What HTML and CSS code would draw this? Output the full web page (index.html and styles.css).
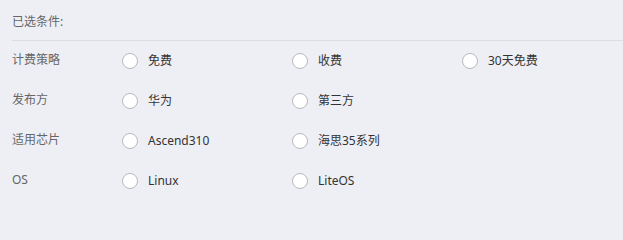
FILE: index.html
```html
<!DOCTYPE html>
<html lang="zh">
<head>
<meta charset="utf-8">
<link rel="stylesheet" href="styles.css">
</head>
<body>
<div class="panel">
  <div class="selected">已选条件:</div>
  <div class="row">
    <div class="label">计费策略</div>
    <div class="options">
      <label class="opt"><span class="radio"></span><span class="text">免费</span></label>
      <label class="opt"><span class="radio"></span><span class="text">收费</span></label>
      <label class="opt"><span class="radio"></span><span class="text">30天免费</span></label>
    </div>
  </div>
  <div class="row">
    <div class="label">发布方</div>
    <div class="options">
      <label class="opt"><span class="radio"></span><span class="text">华为</span></label>
      <label class="opt"><span class="radio"></span><span class="text">第三方</span></label>
    </div>
  </div>
  <div class="row">
    <div class="label">适用芯片</div>
    <div class="options">
      <label class="opt"><span class="radio"></span><span class="text">Ascend310</span></label>
      <label class="opt"><span class="radio"></span><span class="text">海思35系列</span></label>
    </div>
  </div>
  <div class="row">
    <div class="label">OS</div>
    <div class="options">
      <label class="opt"><span class="radio"></span><span class="text">Linux</span></label>
      <label class="opt"><span class="radio"></span><span class="text">LiteOS</span></label>
    </div>
  </div>
</div>
</body>
</html>
```
FILE: styles.css
```css
html, body {
  margin: 0;
  padding: 0;
  background: #eeeff5;
}
body {
  font-family: "Noto Sans", "Noto Sans CJK SC", sans-serif;
  font-size: 12px;
  width: 623px;
  height: 203px;
  overflow: hidden;
}
.panel {
  padding-left: 12px;
}
.selected {
  height: 41px;
  line-height: 20px;
  padding-top: 12px;
  box-sizing: border-box;
  color: #666;
  border-bottom: 1px solid #dcdde2;
}
.row {
  display: flex;
  align-items: center;
  height: 40px;
}
.label {
  width: 110px;
  flex-shrink: 0;
  color: #666;
  line-height: 20px;
  margin-top: -2px;
}
.options {
  display: flex;
}
.opt {
  display: flex;
  align-items: center;
  width: 170px;
  flex-shrink: 0;
}
.radio {
  width: 14px;
  height: 14px;
  border: 1px solid #b8b9be;
  border-radius: 50%;
  background: #fff;
  margin-right: 10px;
}
.text {
  color: #333;
  line-height: 20px;
}
```
